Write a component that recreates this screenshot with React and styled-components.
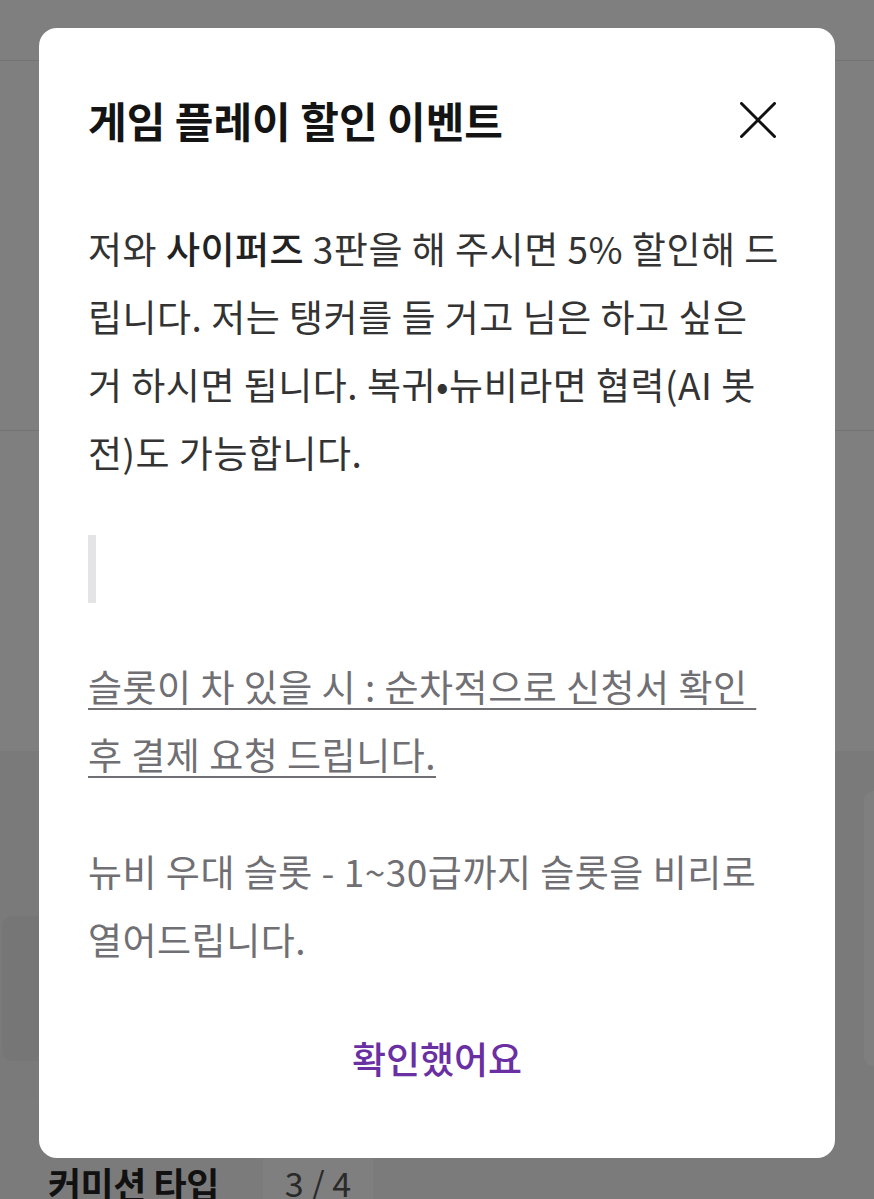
import React from "react";
import styled, { createGlobalStyle } from "styled-components";

const GlobalStyle = createGlobalStyle`
  html, body {
    margin: 0;
    padding: 0;
    background: #ffffff;
  }
  body {
    font-family: "Noto Sans CJK KR", "Noto Sans", sans-serif;
  }
  * {
    box-sizing: border-box;
  }
`;

export default function App() {
  return (
    <>
      <GlobalStyle />
      <Page>
        <TopBar />
        <Section />
        <GrayBand>
          <SideCard />
          <ListCard />
        </GrayBand>
        <InfoRow>
          <InfoLabel>커미션 타입</InfoLabel>
          <InfoChip>3 / 4</InfoChip>
        </InfoRow>
      </Page>

      <ModalBackDrop>
        <ModalWrapper>
          <ModalHeader>
            <ModalTitle>게임 플레이 할인 이벤트</ModalTitle>
            <CloseButton type="button" aria-label="닫기">
              <svg width="36" height="36" viewBox="0 0 36 36" fill="none">
                <path d="M1.5 1.5L34.5 34.5M34.5 1.5L1.5 34.5" stroke="#111" strokeWidth="3" strokeLinecap="round" />
              </svg>
            </CloseButton>
          </ModalHeader>

          <ModalBody>
            <Paragraph>
              저와 <Strong>사이퍼즈</Strong> 3판을 해 주시면 5% 할인해 드<br />
              립니다. 저는 탱커를 들 거고 님은 하고 싶은<br />
              거 하시면 됩니다. 복귀•뉴비라면 협력(AI 봇<br />
              전)도 가능합니다.
            </Paragraph>
            <Quote />
            <Paragraph $tone="muted" $underline>
              슬롯이 차 있을 시 : 순차적으로 신청서 확인&nbsp;<br />
              후 결제 요청 드립니다.
            </Paragraph>
            <Paragraph $tone="muted">
              뉴비 우대 슬롯 - 1~30급까지 슬롯을 비리로<br />
              열어드립니다.
            </Paragraph>
          </ModalBody>

          <ConfirmButton type="button">확인했어요</ConfirmButton>
        </ModalWrapper>
      </ModalBackDrop>
    </>
  );
}

/* page behind the dialog */
const Page = styled.main`
  height: 1199px;
  overflow: hidden;
  display: flex;
  flex-direction: column;
`;

const TopBar = styled.header`
  height: 61px;
  flex-shrink: 0;
  border-bottom: 1px solid #e6e6e6;
`;

const Section = styled.section`
  height: 370px;
  flex-shrink: 0;
  border-bottom: 1px solid #e6e6e6;
`;

const GrayBand = styled.div`
  margin-top: 320px;
  height: 350px;
  flex-shrink: 0;
  display: flex;
  justify-content: space-between;
  align-items: flex-start;
  padding: 40px 0 0 2px;
  background: #f4f4f4;
`;

const SideCard = styled.div`
  margin-top: 125px;
  width: 300px;
  height: 145px;
  border-radius: 10px;
  background: #ececec;
`;

const ListCard = styled.div`
  width: 10px;
  height: 275px;
  border-radius: 12px 0 0 12px;
  background: #ffffff;
`;

const InfoRow = styled.div`
  flex-shrink: 0;
  display: flex;
  align-items: flex-start;
  gap: 44px;
  padding: 60px 0 0 48px;
  height: 120px;
  background: #f6f6f6;
`;

const InfoLabel = styled.span`
  font-size: 36px;
  line-height: 44px;
  font-weight: 700;
  color: #222;
  letter-spacing: -0.5px;
`;

const InfoChip = styled.span`
  margin-top: -8px;
  padding: 8px 22px;
  font-size: 34px;
  line-height: 44px;
  color: #555;
  background: #ffffff;
`;

/* dialog */
const ModalBackDrop = styled.div`
  position: fixed;
  inset: 0;
  display: flex;
  justify-content: center;
  align-items: flex-start;
  padding-top: 28px;
  background-color: rgba(0, 0, 0, 0.5);
  z-index: 999;
`;

const ModalWrapper = styled.article`
  width: 796px;
  display: flex;
  flex-direction: column;
  padding: 64px 49px 50px;
  background: #ffffff;
  border-radius: 18px;
`;

const ModalHeader = styled.div`
  display: flex;
  align-items: center;
  justify-content: space-between;
  height: 56px;
`;

const ModalTitle = styled.h2`
  margin: 0;
  font-size: 42px;
  line-height: 56px;
  font-weight: 700;
  color: #141414;
`;

const CloseButton = styled.button`
  width: 56px;
  height: 56px;
  display: flex;
  align-items: center;
  justify-content: center;
  padding: 0;
  border: 0;
  background: none;
  cursor: pointer;
`;

const ModalBody = styled.div`
  margin-top: 66px;
  display: flex;
  flex-direction: column;
  gap: 49px;
`;

const Paragraph = styled.p`
  margin: 0;
  font-size: 37px;
  line-height: 68px;
  letter-spacing: 0.5px;
  white-space: nowrap;
  color: ${(props) => (props.$tone === "muted" ? "#6f6f74" : "#333333")};
  text-decoration: ${(props) => (props.$underline ? "underline" : "none")};
  text-decoration-thickness: 2px;
  text-underline-offset: 6px;
`;

const Strong = styled.strong`
  font-weight: 500;
  color: #222;
`;

const Quote = styled.blockquote`
  margin: 0;
  height: 68px;
  border-left: 8px solid #e4e4e6;
`;

const ConfirmButton = styled.button`
  margin-top: 35px;
  height: 100px;
  padding: 0;
  border: 0;
  background: none;
  font-family: "Noto Sans CJK KR", "Noto Sans", sans-serif;
  font-size: 37px;
  font-weight: 500;
  color: #6a2fa2;
  cursor: pointer;
`;
